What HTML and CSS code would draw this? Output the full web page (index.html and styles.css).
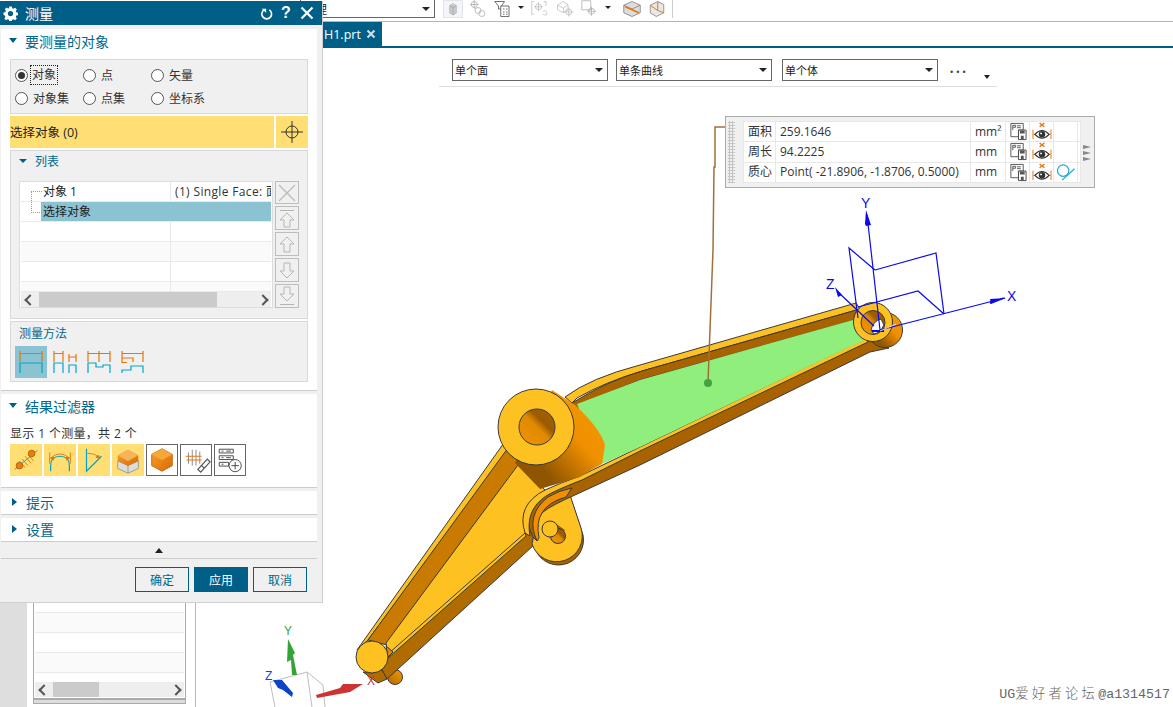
FILE: index.html
```html
<!DOCTYPE html>
<html lang="zh">
<head>
<meta charset="utf-8">
<title>测量</title>
<link rel="stylesheet" href="styles.css">
</head>
<body>
<svg class="defs" width="0" height="0">
  <symbol id="i-save" viewBox="0 0 24 20">
    <path d="M4.500 1.500H17.500V8.500H12.500V15.500H4.500Z" fill="#fff" stroke="#555"/>
    <path d="M6.500 3.500h3v2h-3zM6.500 5.500v3" fill="none" stroke="#555"/>
    <path d="M11 4h4M11 6h4" stroke="#555" fill="none"/>
    <path d="M12.500 8.500H20.500V18.500H12.500Z" fill="#fff" stroke="#444"/>
    <path d="M14 9h5v3h-5zM15 14.500h3v4h-3z" fill="#555"/>
  </symbol>
  <symbol id="i-eye" viewBox="0 0 24 20">
    <path d="M9.500 1l5 4M14.500 1l-5 4" stroke="#e8750a" stroke-width="1.500"/>
    <path d="M2.500 8V18M21.500 8V18M3 13h3M18 13h3" stroke="#e8750a"/>
    <path d="M4.500 13Q12 5 19.500 13Q12 21 4.500 13Z" fill="#fff" stroke="#333" stroke-width="1.200"/>
    <circle cx="12" cy="13" r="3.400" fill="#333"/>
    <circle cx="11" cy="12" r="1" fill="#fff"/>
  </symbol>
  <linearGradient id="g-cyl" x1="0" y1="1" x2="1" y2="0">
    <stop offset="0" stop-color="#8f5500"/><stop offset=".25" stop-color="#8f5500"/><stop offset=".6" stop-color="#f09000"/><stop offset="1" stop-color="#f39a00"/>
  </linearGradient>
  <linearGradient id="g-nub" x1="0" y1="1" x2="1" y2="0">
    <stop offset="0" stop-color="#b06c00"/><stop offset="1" stop-color="#f39a00"/>
  </linearGradient>
  <linearGradient id="g-hole" x1="0" y1="1" x2="1" y2="0">
    <stop offset="0" stop-color="#f29400"/><stop offset=".5" stop-color="#e08a00"/><stop offset=".65" stop-color="#9a5c00"/><stop offset="1" stop-color="#a66400"/>
  </linearGradient>
  <linearGradient id="g-cube" x1="0" y1="0" x2="1" y2="1">
    <stop offset="0" stop-color="#f7a12c"/><stop offset="1" stop-color="#d96a05"/>
  </linearGradient>
</svg>

<div class="app">
  <div class="toolbar">
    <div class="combo combo-top"><span class="combo-text">管理</span><span class="caret"></span></div>
    <div class="tool-group">
      <svg class="tool tool-on" viewBox="0 0 24 24"><path d="M7 7l5-3 5 3v11l-5 3-5-3z" fill="#ccc" stroke="#aaa"/><path d="M7 7l5 3 5-3M12 10v11" stroke="#999" fill="none"/></svg>
      <svg class="tool" viewBox="0 0 24 24"><g fill="none" stroke="#aaa"><circle cx="7" cy="6" r="4"/><path d="M7 0v12M1 6h12"/><circle cx="12" cy="14" r="4"/><circle cx="17" cy="18" r="4"/></g></svg>
      <svg class="tool tool-dark" viewBox="0 0 24 24"><g fill="none" stroke="#444"><path d="M1 2h13l-4 6v4H6V8z"/><path d="M9 8h11v14H9z" fill="#fff"/><path d="M12 12h2M16 12h2M12 16h2M16 16h2M12 19h2M16 19h2"/></g></svg>
      <span class="mini-caret"></span>
      <svg class="tool" viewBox="0 0 24 24"><g fill="none" stroke="#bbb"><path d="M4 2H1v17h3M17 2h3v6"/><circle cx="10" cy="9" r="4"/><path d="M10 3v12M4 9h12"/><path d="M16 16q4-4 5 1t-5 2"/></g></svg>
      <svg class="tool" viewBox="0 0 24 24"><g fill="none" stroke="#bbb"><path d="M2 7l7-5 7 4v7l-6 4-8-4z"/><path d="M2 7l8 4 6-5M10 11v6"/><circle cx="17" cy="16" r="4"/><path d="M17 10v12M11 16h12"/></g></svg>
      <svg class="tool" viewBox="0 0 24 24"><g fill="none" stroke="#aaa"><path d="M1 1h12v12H1z"/><circle cx="14" cy="15" r="4"/><path d="M14 9v12M8 15h12"/></g></svg>
      <span class="mini-caret"></span>
      <svg class="tool tool-gap" viewBox="0 0 24 24"><path d="M1 7l11-5 11 5v10l-11 5-11-5z" fill="#ddd" stroke="#777"/><path d="M1 7l11 5 11-5" fill="none" stroke="#777"/><path d="M3 9l18 8" stroke="#e8750a" stroke-width="2"/></svg>
      <svg class="tool" viewBox="0 0 24 24"><path d="M3 7l10-5 8 4v11l-10 5-8-5z" fill="#e8e8e8" stroke="#777"/><path d="M13 2v12M13 14l8 3M13 14l-10-7" fill="none" stroke="#e8750a" stroke-width="1.300"/></svg>
    </div>
    <span class="toolbar-sep"></span>
  </div>
  <div class="tabs">
    <div class="tab"><span>H1.prt</span><svg class="tab-x" viewBox="0 0 10 10"><path d="M1.500 1.500l7 7M8.500 1.500l-7 7" stroke="#cfe0e8" stroke-width="2"/></svg></div>
  </div>

  <div class="selbar">
    <div class="combo combo-sel combo-first"><span class="combo-text">单个面</span><span class="caret"></span></div>
    <div class="combo combo-sel"><span class="combo-text">单条曲线</span><span class="caret"></span></div>
    <div class="combo combo-sel combo-last"><span class="combo-text">单个体</span><span class="caret"></span></div>
    <span class="dots">···</span>
    <span class="mini-caret mini-low"></span>
  </div>

  <svg class="scene" viewBox="0 0 1173 707" width="1173" height="707">
    <!-- lower arm -->
    <g stroke="#3a3a3a" stroke-width="1" stroke-linejoin="round">
      <circle cx="395" cy="677" r="7.500" fill="url(#g-nub)"/>
      <path d="M382 670L388 658L525 525L545 535L387 679Z" fill="#b06c00"/>
      <path d="M363 672L372 673L382 670L387 679L378 683Z" fill="#b06c00"/>
      <path d="M357 650L506 440L512 446L368 640Z" fill="#fdc221"/>
      <path d="M368 640L508 448L522 465L387 645Z" fill="#c97a00"/>
      <path d="M386 643L518 465L545 490L524 513L526 534L388 656Z" fill="#fdc221"/>
      <path d="M388 658L526 536L525 533L388 654Z" fill="#fdc221"/>
      <path d="M386 646L393 652L388 657Z" fill="#e08a00"/>
      <circle cx="372" cy="657" r="16" fill="#fdc221"/>
    </g>
    <!-- lug -->
    <g stroke="#3a3a3a" stroke-width="1" stroke-linejoin="round">
      <path d="M534 545A25 25 0 0 0 583 535L570 497L540 505Z" fill="#a86200"/>
      <path d="M532 544A24 24 0 0 0 581 528L570 495L540 505Z" fill="#fdc221"/>
      <path d="M545 534L555 523L565 530L555 544Z" fill="url(#g-hole)" stroke="none"/>
      <circle cx="558" cy="536" r="7.500" fill="url(#g-hole)"/>
      <circle cx="550" cy="529" r="8" fill="#fdc221"/>
    </g>
    <!-- upper arm -->
    <g stroke="#3a3a3a" stroke-width="1" stroke-linejoin="round">
      <path d="M533 537Q520 512 545 494Q558 485 580 477L640 448L866 340L889 348L870 352L640 465L575 495Q552 505 543 512Q532 520 537 541Z" fill="#a86200"/>
      <path d="M537 541Q525 515 548 497Q560 490 572 488L566 497Q548 502 542 513Q536 522 539 538Z" fill="#f09000"/>
      <path d="M525 533Q516 505 545 490Q560 483 580 476L640 447L866 338L868 342L640 451L582 480Q556 490 546 496Q525 510 530 536Z" fill="#fdc221"/>
      <path d="M565 397Q590 378 640 365L856 303L860 309L642 371Q605 382 577 398L572 403Z" fill="#fdc221"/>
      <path d="M572 403Q605 382 642 371L860 309L862 318L640 380L595 398L577 410Z" fill="#a86200"/>
    </g>
    <path d="M577 404L640 380L860 318L864 340L640 447L602 464Z" fill="#8fee7c"/>
    <!-- hub -->
    <g stroke="#3a3a3a" stroke-width="1" stroke-linejoin="round">
      <path d="M552 390L575 405Q600 428 605 445L602 464Q590 470 580 477Q560 483 540 489L515 463Z" fill="url(#g-cyl)" stroke="none"/>
      <circle cx="536" cy="427" r="38" fill="#fdc221"/>
      <circle cx="537" cy="427" r="18" fill="url(#g-hole)"/>
    </g>
    <!-- right end -->
    <g stroke="#3a3a3a" stroke-width="1">
      <circle cx="885" cy="330" r="17.500" fill="url(#g-cyl)"/>
      <circle cx="873" cy="322" r="19.500" fill="#fdc221"/>
      <circle cx="873" cy="322.500" r="12" fill="url(#g-hole)"/>
      <path d="M871 330Q873 321 881 319L884 325Q880 333 874 334Z" fill="#fff"/>
    </g>
    <!-- csys -->
    <g fill="none" stroke="#0a0aee" stroke-width="1.200">
      <path d="M880 330L867 215"/>
      <path d="M880 330L1005 298"/>
      <path d="M874 326L838 292"/>
      <path d="M875 270L936 253L944 314"/>
      <path d="M875 270L849 248L858 318"/>
      <path d="M858 307L918 291L944 314"/>
      <path d="M872 331H884" stroke-width="2"/>
    </g>
    <path d="M880 331L896 324" stroke="#ddd" fill="none"/>
    <g fill="#0a0aee">
      <path d="M866 210L871 225L866 226L865 224Z"/>
      <path d="M1005 297L990 301L990 304Z M1006 298L990 299L991 304Z"/>
      <path d="M835 287L842 295L838 297Z"/>
    </g>
    <g class="axis-blue">
      <text x="861" y="208">Y</text>
      <text x="1007" y="301">X</text>
      <text x="826" y="289">Z</text>
    </g>
    <!-- leader -->
    <path d="M726 127H715V167H714L713 250L708 383" fill="none" stroke="#a0703c" stroke-width="1.500"/>
    <circle cx="708" cy="383" r="4" fill="#3fa33f"/>
    <!-- triad -->
    <g fill="none" stroke="#bdbdbd">
      <path d="M270 682L307 672L323 685L325 707"/>
      <path d="M270 682L275 707M307 672L312 707"/>
    </g>
    <path d="M288 639L295 653L293 655L297 675L292 675L291 660L287 662Z" fill="#36a33a"/>
    <path d="M273 680L282 680L293 693L292 697L283 690L278 688Z" fill="#0d43c8"/>
    <path d="M316 695L340 688L343 684L363 684L350 692L317 698Z" fill="#cc3333"/>
    <text class="axis axis-y" x="284" y="635">Y</text>
    <text class="axis axis-z" x="265" y="680">Z</text>
    <text class="axis axis-x" x="367" y="685">X</text>
  </svg>

  <aside class="underpanel">
    <div class="under-box">
      <div class="under-row under-first"></div>
      <div class="under-row under-alt"></div>
      <div class="under-row"></div>
      <div class="under-row under-alt"></div>
      <div class="hscroll under-scroll">
        <span class="arrow-l"></span><span class="thumb thumb-under"></span><span class="arrow-r"></span>
      </div>
    </div>
    <div class="under-foot"></div>
  </aside>

  <section class="measure-panel">
    <div class="grip"></div>
    <table class="measure-table">
      <tr><td class="m-name">面积</td><td class="m-val">259.1646</td><td class="m-unit">mm²</td>
        <td class="m-ic"><svg class="ic24"><use href="#i-save"/></svg></td><td class="m-ic"><svg class="ic24"><use href="#i-eye"/></svg></td><td class="m-ic"></td><td class="m-end"></td></tr>
      <tr><td class="m-name">周长</td><td class="m-val">94.2225</td><td class="m-unit">mm</td>
        <td class="m-ic"><svg class="ic24"><use href="#i-save"/></svg></td><td class="m-ic"><svg class="ic24"><use href="#i-eye"/></svg></td><td class="m-ic"></td><td class="m-end"></td></tr>
      <tr><td class="m-name">质心</td><td class="m-val">Point( -21.8906, -1.8706, 0.5000)</td><td class="m-unit">mm</td>
        <td class="m-ic"><svg class="ic24"><use href="#i-save"/></svg></td><td class="m-ic"><svg class="ic24"><use href="#i-eye"/></svg></td>
        <td class="m-ic"><svg class="ic24" viewBox="0 0 24 20"><circle cx="9" cy="8" r="6" fill="none" stroke="#1fa8d0" stroke-width="1.300"/><path d="M8 18L21 6" stroke="#1fa8d0" stroke-width="1.300"/></svg></td><td class="m-end"></td></tr>
    </table>
    <div class="panel-arrows"><span></span><span></span><span></span></div>
  </section>

  <div class="watermark">UG<span class="wm-cjk">爱好者论坛</span>@a1314517</div>

  <div class="dialog">
    <header class="dlg-title">
      <svg class="dlg-gear" viewBox="0 0 16 16"><path d="M6.500 0h3l.4 2.200 1.500.6L13.200 1.500l2.100 2.100-1.300 1.800.6 1.500 2.200.4v3l-2.200.4-.6 1.500 1.300 1.800-2.100 2.100-1.800-1.300-1.500.6-.4 2.200h-3l-.4-2.200-1.500-.6-1.800 1.300-2.100-2.100 1.300-1.800-.6-1.500L-.2 10V7l2.200-.4.6-1.500L1.300 3.300 3.400 1.200l1.800 1.300 1-.4z" fill="#fff" transform="translate(.7 .4) scale(.92)"/><circle cx="8" cy="8" r="2.800" fill="#005f87"/></svg>
      <span class="dlg-name">测量</span>
      <svg class="dlg-btn" viewBox="0 0 16 16"><path d="M5 3.500A6 6 0 1 0 11.500 3.500" fill="none" stroke="#fff" stroke-width="2"/><path d="M2 2h5.500v5z" fill="#fff"/></svg>
      <span class="dlg-help">?</span>
      <svg class="dlg-btn dlg-close" viewBox="0 0 14 14"><path d="M1.500 1.500l11 11M12.500 1.500l-11 11" stroke="#fff" stroke-width="2.200"/></svg>
    </header>

    <div class="dlg-section sec-main">
      <div class="sec-head"><span class="tri-down"></span>要测量的对象</div>
      <div class="group radio-group">
        <label class="radio"><span class="dot dot-on"></span><span class="radio-focus">对象</span></label>
        <label class="radio"><span class="dot"></span>点</label>
        <label class="radio"><span class="dot"></span>矢量</label>
        <label class="radio"><span class="dot"></span>对象集</label>
        <label class="radio"><span class="dot"></span>点集</label>
        <label class="radio"><span class="dot"></span>坐标系</label>
      </div>
      <div class="select-row">
        <div class="select-label">选择对象 (0)</div>
        <div class="select-btn"><svg class="cross" viewBox="0 0 22 22"><circle cx="11" cy="11" r="6" fill="none" stroke="#333"/><path d="M11 0v22M0 11h22" stroke="#333"/></svg></div>
      </div>
      <div class="group list-group">
        <div class="sub-head"><span class="tri-down tri-small"></span>列表</div>
        <div class="list-wrap">
          <div class="tree">
            <div class="tree-row"><div class="tree-a tree-first">对象 1</div><div class="tree-b tree-clip">(1) Single Face: 面</div></div>
            <div class="tree-row tree-sel"><div class="tree-a tree-second"><span class="sel-fill">选择对象</span></div><div class="tree-b sel-b"></div></div>
            <div class="tree-row"><div class="tree-a"></div><div class="tree-b"></div></div>
            <div class="tree-row alt"><div class="tree-a"></div><div class="tree-b"></div></div>
            <div class="tree-row"><div class="tree-a"></div><div class="tree-b"></div></div>
            <div class="tree-row alt short"><div class="tree-a"></div><div class="tree-b"></div></div>
            <div class="hscroll"><span class="arrow-l"></span><span class="thumb"></span><span class="arrow-r"></span></div>
          </div>
          <div class="side-btns">
            <div class="side-btn side-x"><svg viewBox="0 0 22 22"><path d="M3 3l16 16M19 3L3 19" stroke="#bbb" stroke-width="1.300"/></svg></div>
            <div class="side-btn"><svg viewBox="0 0 22 22"><path d="M4 3.500H18M11 6L4 13H8V20H14V13H18Z" fill="none" stroke="#b5b5b5"/></svg></div>
            <div class="side-btn"><svg viewBox="0 0 22 22"><path d="M11 4L4 11H8V19H14V11H18Z" fill="none" stroke="#b5b5b5"/></svg></div>
            <div class="side-btn"><svg viewBox="0 0 22 22"><path d="M11 19L4 12H8V4H14V12H18Z" fill="none" stroke="#b5b5b5"/></svg></div>
            <div class="side-btn"><svg viewBox="0 0 22 22"><path d="M4 19.500H18M11 16L4 9H8V2H14V9H18Z" fill="none" stroke="#b5b5b5"/></svg></div>
          </div>
        </div>
      </div>
      <div class="group method-group">
        <div class="method-title">测量方法</div>
        <div class="method-icons">
          <svg class="method method-on" viewBox="0 0 32 32"><g fill="none" stroke-width="1.200"><path d="M5 5V16M27 5V16M5 7.500H27" stroke="#e8750a"/><path d="M5 27V17H27V27" stroke="#00a5cc"/></g></svg>
          <svg class="method" viewBox="0 0 32 32"><g fill="none" stroke-width="1.200"><path d="M5 5V16M14 5V16M5 7.500H14M20 8V16M27 8V16M20 11H27" stroke="#e8750a"/><path d="M5 27V17H14V27M20 27V19H27V27" stroke="#00a5cc"/></g></svg>
          <svg class="method" viewBox="0 0 32 32"><g fill="none" stroke-width="1.200"><path d="M5 5V16M16 5V16M27 5V16M5 7.500H27" stroke="#e8750a"/><path d="M5 27V17H13V21H20V19H27V27" stroke="#00a5cc"/></g></svg>
          <svg class="method" viewBox="0 0 32 32"><g fill="none" stroke-width="1.200"><path d="M5 5V17M26 5V16M5 7.500H26M5 12H16V16M5 16.500H10" stroke="#e8750a"/><path d="M5 27V24H14V20H26V27" stroke="#00a5cc"/></g></svg>
        </div>
      </div>
    </div>

    <div class="dlg-section sec-filter">
      <div class="sec-head"><span class="tri-down"></span>结果过滤器</div>
      <div class="filter-note">显示 1 个测量，共 2 个</div>
      <div class="filter-icons">
        <svg class="fbtn on" viewBox="0 0 32 32"><g fill="none"><path d="M4 26L28 6" stroke="#00a5cc"/><path d="M12 15l6 7M15 12l6 7M18 10l6 7M9 17l6 7" stroke="#e8750a"/></g><circle cx="9" cy="22" r="3.500" fill="#e8800f" stroke="#b85f00"/><circle cx="22" cy="9" r="3.500" fill="#e8800f" stroke="#b85f00"/></svg>
        <svg class="fbtn on" viewBox="0 0 32 32"><g fill="none"><path d="M6 28V22Q6 12 16 12T26 22V28" stroke="#00a5cc" stroke-width="1.300"/><path d="M5 8V20M27 8V20" stroke="#e8750a"/><path d="M6 14Q16 5 26 14" stroke="#e8750a"/><path d="M6 14l3-1v3zM26 14l-3-1v3z" fill="#e8750a" stroke="#e8750a"/></g></svg>
        <svg class="fbtn on" viewBox="0 0 32 32"><g fill="none"><path d="M8 4V28L24 12" stroke="#00a5cc" stroke-width="1.300"/><path d="M9 9Q18 9 22 14" stroke="#e8750a"/><path d="M22 14l-4-1 3-2z" fill="#e8750a" stroke="#e8750a"/></g></svg>
        <svg class="fbtn on" viewBox="0 0 32 32"><path d="M5 17L16 22L27 17V25L16 30L5 25Z" fill="#ddd" stroke="#999"/><path d="M16 22V30" stroke="#999"/><path d="M16 5L27 11V17L16 22L5 17V11Z" fill="url(#g-cube)"/><path d="M5 11L16 17L27 11L16 5Z" fill="#f7b35a"/></svg>
        <svg class="fbtn" viewBox="0 0 32 32"><path d="M16 4L27 10V22L16 28L5 22V10Z" fill="url(#g-cube)" stroke="#c96a0a"/><path d="M5 10L16 16L27 10L16 4Z" fill="#f7a838"/></svg>
        <svg class="fbtn" viewBox="0 0 32 32"><g fill="none"><path d="M18 26L28 15l3 3-10 11zM22 22l3 3" stroke="#555" stroke-width="1.300"/><path d="M8 8V20M12 5V22M16 5V22M20 7V20" stroke="#888"/><path d="M5 12H22M6 16H22" stroke="#e8750a" stroke-width="1.300"/></g></svg>
        <svg class="fbtn" viewBox="0 0 32 32"><g fill="none" stroke="#444"><path d="M4.500 4.500h15v4h-15zM4.500 11.500h15v4h-15zM4.500 18.500h10v4h-10z"/><path d="M7 6.500h2M12 6.500h5M7 13.500h2M12 13.500h5M7 20.500h2"/><circle cx="21.500" cy="22" r="6.500" fill="#fff"/><path d="M21.500 18v8M17.500 22h8"/></g></svg>
      </div>
    </div>

    <div class="dlg-section sec-fold"><div class="sec-head"><span class="tri-right"></span>提示</div></div>
    <div class="dlg-section sec-fold"><div class="sec-head"><span class="tri-right"></span>设置</div></div>
    <div class="more-row"><span class="tri-up"></span></div>
    <footer class="dlg-actions">
      <button class="btn" type="button">确定</button>
      <button class="btn btn-primary" type="button">应用</button>
      <button class="btn" type="button">取消</button>
    </footer>
  </div>
</div>
</body>
</html>
```
FILE: styles.css
```css
* { box-sizing: border-box; }
html, body { margin: 0; padding: 0; }
body { width: 1173px; height: 707px; overflow: hidden; background: #fff; font-family: "Open Sans", "Noto Sans CJK SC", sans-serif; font-size: 12px; color: #222; }
.defs { position: absolute; }
.app { position: relative; width: 1173px; height: 707px; overflow: hidden; background: #fff; }

/* top bars */
.toolbar { height: 22px; display: flex; align-items: flex-start; padding-left: 300px; border-bottom: 1px solid #b4b4b4; }
.combo { display: flex; align-items: center; border: 1px solid #666; background: #fff; position: relative; }
.combo-text { flex: 1; padding-left: 2px; white-space: nowrap; overflow: hidden; font-size: 11px; }
.caret { width: 0; height: 0; border-left: 4px solid transparent; border-right: 4px solid transparent; border-top: 4px solid #222; margin-right: 4px; }
.combo-top { width: 135px; height: 19px; margin-top: -1px; }
.combo-top .combo-text { font-size: 12px; }
.tool-group { display: flex; align-items: center; height: 20px; margin-left: 8px; }
.tool { width: 20px; height: 18px; margin-right: 5px; margin-top: -2px; flex: none; }
.tool-on { background: #f3f5fa; border: 1px solid #e4e6ee; }
.tool-gap { margin-left: 5px; }
.mini-caret { width: 0; height: 0; border-left: 3px solid transparent; border-right: 3px solid transparent; border-top: 3px solid #222; margin: -6px 6px 0 0; flex: none; }
.toolbar-sep { width: 1px; height: 18px; background: #ccc; }
.tabs { height: 26px; border-bottom: 2px solid #005f87; padding-left: 323px; }
.tab { width: 59px; height: 24px; background: #005f87; color: #fff; font-size: 12.500px; display: flex; align-items: center; padding-left: 1px; gap: 5px; }
.tab-x { width: 10px; height: 10px; }

.selbar { position: absolute; left: 439px; top: 59px; width: 558px; height: 28px; display: flex; align-items: flex-start; border-bottom: 1px solid #ddd; z-index: 2; }
.combo-sel { width: 156px; height: 22px; margin-right: 8px; }
.combo-first { margin-left: 13px; }
.combo-last { margin-left: 2px; }
.dots { font-size: 20px; line-height: 20px; letter-spacing: 1px; margin: 3px 0 0 3px; color: #444; }
.mini-low { margin: 16px 0 0 16px; border-top-width: 4px; }

.scene { position: absolute; left: 0; top: 0; z-index: 1; }
.scene text { font-family: "Liberation Sans", sans-serif; font-size: 12px; }
.axis-blue text { fill: #0a0aee; font-size: 14px; }
.scene .axis { font-size: 12px; }
.axis-y { fill: #36a33a; }
.axis-z { fill: #0d43ee; }
.axis-x { fill: #cc3333; }

/* underlying panel */
.underpanel { position: absolute; left: 0; top: 48px; width: 196px; height: 659px; background: #fff; border-left: 27px solid #dedede; border-right: 1px solid #b8b8b8; padding: 555px 0 0 6px; z-index: 2; }
.under-box { width: 153px; height: 96px; border: 1px solid #aaa; border-top: 0; padding: 0 1px; display: flex; flex-direction: column; }
.under-row { height: 20px; border-bottom: 1px solid #eaeaea; flex: none; }
.under-first { height: 10px; }
.under-alt { background: #fafafa; }
.under-scroll { margin-top: 9px; }
.under-foot { width: 153px; height: 5px; background: #ddd; border: 1px solid #aaa; }
.hscroll { height: 15px; background: #eee; display: flex; align-items: center; position: relative; flex: none; }
.thumb { display: block; width: 178px; height: 15px; background: #cbcbcb; margin-left: 5px; }
.thumb-under { width: 46px; }
.arrow-l, .arrow-r { display: block; width: 13px; height: 15px; position: relative; flex: none; }
.arrow-l::before, .arrow-r::before { content: ""; position: absolute; top: 4px; width: 6px; height: 6px; border-left: 2px solid #555; border-bottom: 2px solid #555; transform: rotate(45deg); left: 5px; }
.arrow-r { margin-left: auto; }
.arrow-r::before { transform: rotate(225deg); left: 1px; }

/* measure panel */
.measure-panel { position: absolute; left: 725px; top: 116px; width: 370px; height: 72px; background: #f0f0f0; border: 1px solid #aaa; display: flex; z-index: 3; padding: 4px 0 0 2px; }
.grip { width: 7px; height: 62px; background-image: radial-gradient(#c4c4c4 1px, transparent 1.200px); background-size: 3px 3px; flex: none; }
.measure-table { border-collapse: collapse; background: #fff; margin-left: 8px; width: 337px; height: 62px; table-layout: fixed; border: 1px solid #e2e2e2; font-size: 12px; flex: none; }
.measure-table td { border: 1px solid #e8e8e8; padding: 0 0 1px 4px; height: 20px; line-height: 17px; white-space: nowrap; overflow: hidden; color: #333; }
.m-name { width: 32px; }
.m-val { width: 195px; }
.m-unit { width: 35px; }
.measure-table .m-ic { width: 24px; padding: 0; }
.measure-table .m-end { width: 3px; padding: 0; }
.ic24 { display: block; width: 24px; height: 19px; }
.panel-arrows { display: flex; flex-direction: column; gap: 2px; margin: 24px 0 0 2px; }
.panel-arrows span { width: 0; height: 0; border-top: 2.500px solid transparent; border-bottom: 2.500px solid transparent; border-left: 8px solid #888; }

.watermark { position: absolute; right: 3px; bottom: 3px; z-index: 3; color: #666; font-family: "Liberation Mono", "Noto Sans CJK SC", monospace; font-size: 13.300px; line-height: 18px; white-space: nowrap; }
.wm-cjk { letter-spacing: 3.300px; font-weight: 300; }

/* dialog */
.dialog { position: absolute; left: 0; top: 1px; width: 323px; height: 602px; background: #f0f0f0; border-right: 1px solid #d0d0d0; border-bottom: 1px solid #d0d0d0; z-index: 4; }
.dlg-title { height: 24px; background: #005f87; color: #fff; display: flex; align-items: center; padding: 0 8px 0 3px; }
.dlg-gear { width: 15px; height: 15px; }
.dlg-name { flex: 1; margin-left: 7px; font-size: 14px; }
.dlg-btn { width: 13px; height: 13px; }
.dlg-help { font-size: 16px; font-weight: 700; width: 14px; margin: 0 7px 0 6px; text-align: center; line-height: 20px; font-family: "Liberation Sans", sans-serif; }
.dlg-close { width: 14px; height: 14px; }
.dlg-section { width: 316px; margin-left: 1px; background: #fff; border-bottom: 1px solid #ccc; }
.sec-main { margin-top: 4px; height: 362px; padding-left: 9px; }
.sec-filter { margin-top: 3px; height: 94px; padding-left: 9px; }
.sec-fold { margin-top: 3px; height: 24px; }
.sec-head { height: 26px; display: flex; align-items: center; font-size: 14px; color: #00688f; padding-bottom: 3px; }
.sec-main .sec-head, .sec-filter .sec-head { margin-left: -9px; padding-left: 8px; }
.sec-fold .sec-head { height: 24px; padding-left: 11px; padding-bottom: 2px; }
.tri-down { width: 0; height: 0; border-left: 4.500px solid transparent; border-right: 4.500px solid transparent; border-top: 5px solid #005f87; margin-right: 8px; }
.tri-small { border-left-width: 4px; border-right-width: 4px; border-top-width: 4px; margin-right: 8px; }
.tri-right { width: 0; height: 0; border-top: 4.500px solid transparent; border-bottom: 4.500px solid transparent; border-left: 5px solid #005f87; margin-right: 9px; }
.group { background: #f0f0f0; border: 1px solid #d8d8d8; width: 298px; }
.radio-group { margin-top: 4px; height: 55px; display: grid; grid-template-columns: 68px 68px 1fr; grid-auto-rows: 23px; padding: 4px 0 0 4px; }
.radio { display: flex; align-items: center; gap: 5px; color: #333; line-height: 17px; padding-bottom: 1px; }
.dot { width: 13px; height: 13px; border: 1px solid #555; border-radius: 50%; background: #fff; flex: none; position: relative; margin-top: 1px; }
.dot-on::after { content: ""; position: absolute; left: 2px; top: 2px; width: 7px; height: 7px; border-radius: 50%; background: #333; }
.radio-focus { outline: 1px dotted #222; outline-offset: 0; line-height: 18px; margin-left: -2px; padding: 0 1px; }
.select-row { display: flex; gap: 2px; margin-top: 2px; width: 298px; height: 32px; }
.select-label { flex: 1; background: #ffdf73; display: flex; align-items: center; color: #222; font-size: 12.500px; padding-bottom: 2px; }
.select-btn { width: 32px; background: #ffdf73; display: flex; align-items: center; justify-content: center; }
.cross { width: 22px; height: 22px; }
.list-group { margin-top: 2px; height: 169px; padding: 0 8px; }
.sub-head { height: 22px; display: flex; align-items: center; font-size: 12px; color: #00688f; margin-bottom: 8px; padding-bottom: 3px; }
.list-wrap { display: flex; gap: 2px; width: 281px; }
.tree { width: 254px; height: 127px; border: 1px solid #ddd; padding: 0 1px; background: #fff; }
.tree-row { height: 20px; display: flex; border-bottom: 1px solid #eaeaea; font-size: 12px; }
.tree-row.alt { background: #fafafa; }
.tree-row.short { height: 10px; }
.tree-a { width: 150px; border-right: 1px solid #eaeaea; flex: none; white-space: nowrap; line-height: 19px; position: relative; }
.tree-b { flex: 1; padding-left: 4px; white-space: nowrap; overflow: hidden; line-height: 19px; letter-spacing: .35px; color: #333; }
.tree-first { padding-left: 22px; }
.tree-first::before { content: ""; position: absolute; left: 10px; top: 9px; width: 10px; height: 11px; border-left: 1px dotted #999; border-top: 1px dotted #999; }
.tree-second { padding-left: 20px; }
.tree-second::before { content: ""; position: absolute; left: 10px; top: 0; width: 10px; height: 10px; border-left: 1px dotted #999; border-bottom: 1px dotted #999; }
.sel-fill { display: block; height: 19px; padding-left: 2px; background: #8cc3d3; width: 130px; }
.sel-b { background: #8cc3d3; }
.side-btns { display: flex; flex-direction: column; gap: 2px; }
.side-btn { width: 24px; height: 24px; border: 1px solid #bdbdbd; background: #f0f0f0; }
.side-x { height: 23px; }
.side-btn svg { display: block; width: 22px; height: 22px; }
.method-group { margin-top: 2px; height: 61px; padding: 2px 0 0 4px; }
.method-title { font-size: 12px; color: #00688f; padding-left: 4px; height: 20px; line-height: 19px; }
.method-icons { display: flex; gap: 2px; margin-top: 2px; }
.method { width: 32px; height: 32px; }
.method-on { background: #8cc3d3; }
.filter-note { height: 19px; line-height: 18px; margin-top: 5px; color: #333; letter-spacing: .2px; word-spacing: .5px; }
.filter-icons { display: flex; gap: 2px; }
.fbtn { width: 32px; height: 32px; border: 1px solid #666; background: #fff; flex: none; }
.fbtn.on { background: #ffdf73; border-color: #ffdf73; }
.more-row { height: 16px; margin: 1px 0 0 1px; width: 316px; border-bottom: 1px solid #ccc; display: flex; align-items: center; justify-content: center; }
.tri-up { width: 0; height: 0; border-left: 4.500px solid transparent; border-right: 4.500px solid transparent; border-bottom: 5px solid #222; }
.dlg-actions { display: flex; gap: 5px; padding: 8px 0 0 135px; }
.btn { width: 54px; height: 25px; border: 1px solid #005f87; background: #f0f0f0; color: #00688f; font: 12px "Open Sans", "Noto Sans CJK SC", sans-serif; padding: 0; }
.btn-primary { background: #005f87; color: #fff; }
```
